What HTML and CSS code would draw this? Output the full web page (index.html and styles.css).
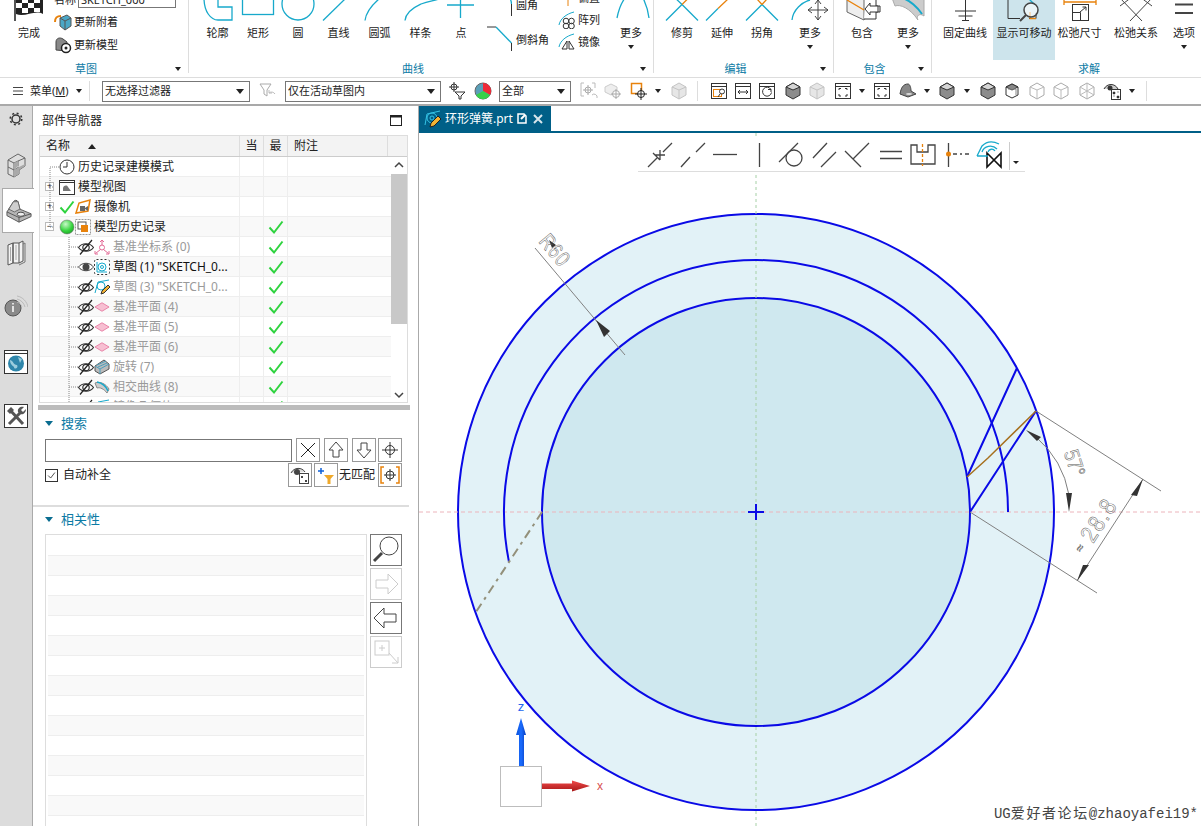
FILE: index.html
```html
<!DOCTYPE html>
<html lang="zh-CN">
<head>
<meta charset="utf-8">
<title>环形弹簧.prt</title>
<link rel="stylesheet" href="styles.css">
</head>
<body>
<svg class="defs" aria-hidden="true">
  <symbol id="eyeoff" viewBox="0 0 16 16"><path d="M.500 8.500C4 3.500 12 3.500 15.500 8.500C12 13.500 4 13.500 .500 8.500Z" fill="none" stroke="#333" stroke-width="1.200"/><circle cx="8" cy="8.500" r="3.200" fill="none" stroke="#333" stroke-width="1.200"/><path d="M2 15.500L14 1" stroke="#222" stroke-width="1.200"/></symbol>
  <symbol id="check" viewBox="0 0 16 16"><path d="M1.500 8.500L6 13.500L14.500 2.500" fill="none" stroke="#2fd33f" stroke-width="2"/></symbol>
  <symbol id="plane" viewBox="0 0 17 16"><path d="M1 8L8.500 3.500L16 8L8.500 12.500Z" fill="#f7bfd2" stroke="#e77fa4"/></symbol>
  <symbol id="cube" viewBox="0 0 18 18"><path d="M9 1L16 5V13L9 17L2 13V5Z" fill="#8c8c8c" stroke="#333"/><path d="M2 5L9 1L16 5L9 8Z" fill="#d5d5d5" stroke="#333"/></symbol>
  <symbol id="cubeg" viewBox="0 0 18 18"><path d="M9 1L16 5V13L9 17L2 13V5Z" fill="#e6e6e6" stroke="#c4c4c4"/><path d="M2 5L9 8L16 5M9 8V17" fill="none" stroke="#c4c4c4"/></symbol>
  <symbol id="cubew" viewBox="0 0 18 18"><path d="M9 1L16 5V13L9 17L2 13V5Z" fill="#fff" stroke="#aaa"/><path d="M2 5L9 8L16 5M9 8V17" fill="none" stroke="#bbb"/></symbol>
  <symbol id="win" viewBox="0 0 18 18"><rect x="1.500" y="1.500" width="15" height="15" fill="#fff" stroke="#333"/><path d="M1.500 4.500H16.500" stroke="#333"/><path d="M5 8V6.500H7M11 6.500H13V8M13 12V14H11M7 14H5V12" fill="none" stroke="#333"/></symbol>
</svg>

<header class="ribbon">
  <section class="group g-sketch">
    <div class="items">
      <div class="rb w42">
        <svg viewBox="0 0 40 22" class="rico"><path d="M6 21V-2" stroke="#555" stroke-width="2"/><path d="M7 -2H34V14C26 9 16 18 7 14Z" fill="#222"/><path d="M13 -2h6v5h-6zM25 -2h6v5h-6zM7 3h6v5H7zM19 3h6v5h-6zM13 8h6v5h-6zM25 8h6v4h-6z" fill="#fff"/></svg>
        <span>完成</span>
      </div>
      <div class="col-sketch">
        <div class="namerow"><span>名称</span><span class="nameinput">SKETCH_000</span></div>
        <div class="srow first"><svg class="sico" viewBox="0 0 18 18"><path d="M6 5L13 2L17 5V13L11 17L6 13Z" fill="#4ba7c6" stroke="#555"/><path d="M6 5L11 8L17 5M11 8V17" fill="none" stroke="#555"/><path d="M1 9C1 4 3 3 7 3" fill="none" stroke="#e8820c" stroke-width="2"/></svg><span>更新附着</span></div>
        <div class="srow"><svg class="sico" viewBox="0 0 18 18"><path d="M2 14V6C2 2 6 1 9 3L13 6V15Z" fill="#888" stroke="#444"/><circle cx="12" cy="12" r="4.500" fill="#fff" stroke="#222" stroke-width="1.500"/><circle cx="12" cy="12" r="1.500" fill="#222"/></svg><span>更新模型</span></div>
      </div>
    </div>
    <div class="gtitle"><span>草图</span><i class="more"></i></div>
  </section>
  <section class="group g-curve">
    <div class="items">
      <div class="rb w41"><svg viewBox="0 0 40 22" class="rico"><path d="M6 -2C6 12 13 20 20 20H34V7H20V-2" class="st"/></svg><span>轮廓</span></div>
      <div class="rb w40"><svg viewBox="0 0 40 22" class="rico"><rect x="4.500" y="-4" width="31" height="18.500" class="st"/></svg><span>矩形</span></div>
      <div class="rb w40"><svg viewBox="0 0 40 22" class="rico"><circle cx="20" cy="4" r="16" class="st"/></svg><span>圆</span></div>
      <div class="rb w41"><svg viewBox="0 0 40 22" class="rico"><path d="M4 20.500L26 -1" class="st"/></svg><span>直线</span></div>
      <div class="rb w41"><svg viewBox="0 0 40 22" class="rico"><path d="M5 20.500C6 12 12 5 19 -1" class="st"/></svg><span>圆弧</span></div>
      <div class="rb w41"><svg viewBox="0 0 40 22" class="rico"><path d="M4 20.500C5 10 18 5 20 4C28 1 32 1 38 -1" class="st"/></svg><span>样条</span></div>
      <div class="rb w40"><svg viewBox="0 0 40 22" class="rico"><path d="M6 5H33M19.500 -3V18" class="st"/></svg><span>点</span></div>
      <div class="smcol big">
        <div class="srow"><svg class="bico" viewBox="0 0 25 35"><path d="M19 3C23 10 24.500 13 24.500 17" class="st"/><path d="M24.500 17V29" stroke="#333" fill="none"/></svg><span>圆角</span></div>
        <div class="srow"><svg class="bico" viewBox="0 0 25 35"><path d="M0 5H9" stroke="#333" fill="none"/><path d="M9 5L24.500 21" class="st"/><path d="M24.500 21V29" stroke="#333" fill="none"/></svg><span>倒斜角</span></div>
      </div>
      <div class="smcol small">
        <div class="srow"><svg class="sico" viewBox="0 0 18 18"><path d="M1 9H10V17" fill="none" stroke="#e8820c"/></svg><span>偏置</span></div>
        <div class="srow"><svg class="sico" viewBox="0 0 18 18"><path d="M1 14C2 8 8 3 16 1" fill="none" stroke="#17a9cb"/><circle cx="8" cy="10" r="2.800" fill="none" stroke="#333"/><circle cx="13.500" cy="10" r="2.800" fill="none" stroke="#333"/><circle cx="8" cy="15" r="2.800" fill="none" stroke="#333"/><circle cx="13.500" cy="15" r="2.800" fill="none" stroke="#333"/></svg><span>阵列</span></div>
        <div class="srow"><svg class="sico" viewBox="0 0 18 18"><path d="M1 14C2 8 8 3 16 1" fill="none" stroke="#17a9cb"/><path d="M9 8L4 16H9ZM11 8V16H16Z" fill="none" stroke="#333"/></svg><span>镜像</span></div>
      </div>
      <div class="rb w44 ml1"><svg viewBox="0 0 40 22" class="rico"><path d="M6 18C8 8 11 2 14 -2M32 -2C35 4 37 10 38 18" class="st"/></svg><span>更多</span><i class="more"></i></div>
    </div>
    <div class="gtitle"><span>曲线</span><i class="more"></i></div>
  </section>
  <section class="group g-edit">
    <div class="items">
      <div class="rb w40"><svg viewBox="0 0 40 22" class="rico"><path d="M4 20.500L20 4.500L36 20.500M20 4.500L10 -5" class="st"/><path d="M20 4.500L26 -1.500" class="so"/></svg><span>修剪</span></div>
      <div class="rb w40"><svg viewBox="0 0 40 22" class="rico"><path d="M4 20.500L16 8.500" class="st"/><path d="M16 8.500L26 -1" class="so"/></svg><span>延伸</span></div>
      <div class="rb w40"><svg viewBox="0 0 40 22" class="rico"><path d="M4 20.500L20 4.500L36 20.500" class="st"/><path d="M20 4.500L15 -1M20 4.500L25 -1" class="so"/></svg><span>拐角</span></div>
      <div class="rb w44 ml6"><svg viewBox="0 0 40 22" class="rico"><path d="M2 20C3 10 12 2 20 0" class="st"/><path d="M28 0V20M18 10H38M25 4L28 0L31 4M25 16L28 20L31 16M22 7L18 10L22 13M34 7L38 10L34 13" fill="none" stroke="#444"/></svg><span>更多</span><i class="more"></i></div>
    </div>
    <div class="gtitle"><span>编辑</span><i class="more"></i></div>
  </section>
  <section class="group g-incl">
    <div class="items">
      <div class="rb w48"><svg viewBox="0 0 40 22" class="rico"><path d="M5 -6V12L22 20V-2Z" fill="#eee" stroke="#666"/><path d="M5 0L22 10" class="so"/><path d="M24 -2H34V6H38V12H34V19H22" fill="#fff" stroke="#333"/><path d="M36 6H28V3L23 9L28 15V12H36Z" fill="#fff" stroke="#333"/></svg><span>包含</span></div>
      <div class="rb w44"><svg viewBox="0 0 40 22" class="rico"><path d="M4 -2C14 -4 26 0 36 -2V16C30 12 28 18 30 20C22 8 12 4 7 6Z" fill="#ccc" stroke="#aaa"/><path d="M14 -2C22 0 30 8 34 14" fill="none" stroke="#17a9cb" stroke-width="2"/></svg><span>更多</span><i class="more"></i></div>
    </div>
    <div class="gtitle"><span>包含</span><i class="more"></i></div>
  </section>
  <section class="group g-solve">
    <div class="items">
      <div class="rb w56"><svg viewBox="0 0 40 22" class="rico"><path d="M20.500 -2V20M10 11H31M13.500 16H27.500M17 20.500H24" fill="none" stroke="#333"/></svg><span>固定曲线</span></div>
      <div class="rb w62 active"><svg viewBox="0 0 40 22" class="rico"><path d="M4 -4V18.500H16M32 13V18.500H25" fill="none" stroke="#333"/><path d="M24 -2L30 4" class="st"/><path d="M26 12V18.500H32" class="so"/><circle cx="27" cy="10" r="7" fill="#fff" fill-opacity=".6" stroke="#444" stroke-width="1.500"/><path d="M22 15L16 21" stroke="#444" stroke-width="2"/></svg><span>显示可移动</span></div>
      <div class="rb w49"><svg viewBox="0 0 40 22" class="rico"><path d="M4 -2V5M4 2H36M36 -2V5" class="so"/><rect x="12.500" y="4.500" width="16" height="16" fill="#fff" stroke="#333"/><path d="M12.500 12.500H20.500V20.500M20 12L26 7M22.500 7H26V10.500" fill="none" stroke="#333"/></svg><span>松弛尺寸</span></div>
      <div class="rb w64"><svg viewBox="0 0 40 22" class="rico"><path d="M4 -2L26 21M36 -2L14 21M4 6L20 -6L36 6" fill="none" stroke="#444"/></svg><span>松弛关系</span></div>
      <div class="rb w32"><svg viewBox="0 0 40 22" class="rico"><path d="M11 4.500H29M11 13H29" stroke="#444" stroke-width="2"/></svg><span>选项</span><i class="more"></i></div>
    </div>
    <div class="gtitle"><span>求解</span></div>
  </section>
</header>

<div class="toolbar">
  <svg class="menuico" viewBox="0 0 10 10"><path d="M0 1.500H10M0 5H10M0 8.500H10" stroke="#444"/></svg>
  <span class="menutext">菜单(<u>M</u>)</span>
  <i class="more ml6"></i>
  <b class="sep ml7"></b>
  <div class="select s148 ml12"><span>无选择过滤器</span><i></i></div>
  <svg class="ti ml8" viewBox="0 0 18 18"><path d="M2 2H13L9 8V14L6 12V8Z" fill="#fff" stroke="#aaa"/><path d="M17 12A4 4 0 0 0 11 11M11 8V11H14" fill="none" stroke="#bbb"/></svg>
  <div class="select s156 ml9"><span>仅在活动草图内</span><i></i></div>
  <svg class="ti ml7" viewBox="0 0 18 18"><circle cx="6" cy="5" r="3" fill="none" stroke="#333"/><path d="M6 0V10M1 5H11" stroke="#333"/><path d="M7 10H17L13 14V17H11V14Z" fill="#fff" stroke="#333"/></svg>
  <svg class="ti ml8" viewBox="0 0 18 18"><circle cx="9" cy="9" r="8" fill="#5a9fb8" stroke="#666"/><path d="M9 9V1A8 8 0 0 1 16 13Z" fill="#ee2a38"/><path d="M9 9L16 13A8 8 0 0 1 2 13Z" fill="#38d04a"/></svg>
  <div class="select s72 ml7"><span>全部</span><i></i></div>
  <svg class="ti ml9" viewBox="0 0 18 18"><path d="M4 1H1V14H4M12 1H15V6" fill="none" stroke="#bbb"/><circle cx="8" cy="8" r="3" fill="none" stroke="#aaa"/><path d="M8 3V13M3 8H13" stroke="#aaa"/><path d="M17 16A3 3 0 0 0 12 13" fill="none" stroke="#bbb"/></svg>
  <svg class="ti ml6" viewBox="0 0 18 18"><path d="M1 5L7 2L13 5V10L7 13L1 10Z" fill="#eee" stroke="#ccc"/><circle cx="12" cy="12" r="3.500" fill="#fff" stroke="#aaa"/><path d="M12 7V17M7 12H17" stroke="#aaa"/></svg>
  <svg class="ti ml8" viewBox="0 0 18 18"><rect x="1.500" y="1.500" width="10" height="10" fill="none" stroke="#e8820c" stroke-width="1.500"/><circle cx="11" cy="12" r="3.500" fill="#fff" stroke="#222"/><path d="M11 6V18M5 12H17" stroke="#222"/></svg>
  <i class="more ml7"></i>
  <svg class="ti ml9"><use href="#cubeg"/></svg>
  <b class="sep ml9"></b>
  <svg class="ti ml12" viewBox="0 0 18 18"><rect x="1.500" y="1.500" width="15" height="15" fill="#fff" stroke="#333"/><path d="M1.500 4.500H16.500" stroke="#333"/><rect x="3.500" y="7.500" width="8" height="7" fill="none" stroke="#e8820c"/><circle cx="12" cy="9.500" r="2.500" fill="#fff" stroke="#333"/><path d="M10 12L8 15" stroke="#333"/></svg>
  <svg class="ti ml6" viewBox="0 0 18 18"><rect x="1.500" y="1.500" width="15" height="15" fill="#fff" stroke="#333"/><path d="M1.500 4.500H16.500M4 10H14M6 8L4 10L6 12M12 8L14 10L12 12" fill="none" stroke="#333"/></svg>
  <svg class="ti ml6" viewBox="0 0 18 18"><rect x="1.500" y="1.500" width="15" height="15" fill="#fff" stroke="#333"/><path d="M1.500 4.500H16.500M13 7.500A4.500 4.500 0 1 0 13.500 10.500M10 7.500H13V10" fill="none" stroke="#333"/></svg>
  <svg class="ti ml8"><use href="#cube"/></svg>
  <svg class="ti ml6"><use href="#cubeg"/></svg>
  <svg class="ti ml8"><use href="#win"/></svg>
  <i class="more ml7"></i>
  <svg class="ti ml8"><use href="#win"/></svg>
  <svg class="ti ml8" viewBox="0 0 18 18"><path d="M1 12C2 6 4 2 9 2C11 2 12 6 12 9L17 12L9 15Z" fill="#888" stroke="#444"/><ellipse cx="10" cy="12" rx="3" ry="1" fill="#ddd"/></svg>
  <i class="more ml7"></i>
  <svg class="ti ml8"><use href="#cube"/></svg>
  <i class="more ml8"></i>
  <svg class="ti ml9"><use href="#cube"/></svg>
  <svg class="ti ml6" viewBox="0 0 18 18"><path d="M9 2L15 5V13L9 16L3 13V5Z" fill="#fff" stroke="#333"/><path d="M3 5L9 2L15 5L9 8Z" fill="#888" stroke="#333"/><path d="M5 7H13V13" fill="none" stroke="#888"/></svg>
  <svg class="ti ml7"><use href="#cubew"/></svg>
  <svg class="ti ml6"><use href="#cubew"/></svg>
  <svg class="ti ml8" viewBox="0 0 18 18"><path d="M9 1L16 5V13L9 17L2 13V5Z" fill="#fff" stroke="#aaa"/><path d="M2 5L16 13M16 5L2 13M9 1V17" fill="none" stroke="#bbb"/></svg>
  <svg class="ti ml7" viewBox="0 0 18 18"><path d="M1 7C4 1 12 1 15 7" fill="#ccc" stroke="#333"/><circle cx="7" cy="6" r="2.500" fill="#333"/><rect x="8.500" y="7.500" width="9" height="10" fill="#fff" stroke="#333"/><path d="M10 10h2v2h-2zM14 10h2M10 14h2M14 14h2v2h-2z" fill="#333" stroke="#333" stroke-width=".5"/></svg>
  <i class="more ml8"></i>
  <b class="sep ml11"></b>
</div>

<main class="main">
  <nav class="tabs">
    <div class="tab t-gear"><svg class="tabi16" viewBox="0 0 16 16"><circle cx="8" cy="8" r="4" fill="none" stroke="#333" stroke-width="1.500"/><circle cx="8" cy="8" r="5.800" fill="none" stroke="#333" stroke-width="1.500" stroke-dasharray="2 2.550"/></svg></div>
    <div class="tab t-cube"><svg class="tabi24" viewBox="0 0 24 26"><path d="M4 8L14 2L21 6V14L15 18V22L10 25L4 22Z" fill="#dedede" stroke="#666"/><path d="M4 8L10 11L14 9L14 14M14 9L21 6M10 11V25M4 15L10 18L15 15" fill="none" stroke="#666"/><path d="M10 11L14 9V14L10 18ZM15 15L21 12V14L15 18ZM10 18L15 15V22L10 25Z" fill="#a9a9a9"/></svg></div>
    <div class="tab t-part active"><svg class="tabi28" viewBox="0 0 28 26"><path d="M1 14L8 3C9 1 12 1 13 3L15 11L27 16V19L14 25L1 18Z" fill="#b5b5b5" stroke="#555"/><path d="M1 14L14 20L27 16M14 20V25" fill="none" stroke="#555"/><path d="M8 3L13 3L15 11L9 14L3 11Z" fill="#cfcfcf" stroke="#666"/><ellipse cx="16" cy="16.500" rx="4" ry="2.200" fill="#eee" stroke="#444"/></svg></div>
    <div class="tab t-book"><svg class="tabi24" viewBox="0 0 24 26"><path d="M4 5L9 3V23L4 25ZM9 3H15V23H9ZM15 3L19 1V21L15 23" fill="#f2f2f2" stroke="#555"/><path d="M6.500 7V21M12 5V20" stroke="#aaa"/><path d="M19 4L21 3V22L15 25" fill="none" stroke="#777"/></svg></div>
    <div class="tab t-info"><svg class="tabi24" viewBox="0 0 24 24"><circle cx="9" cy="14" r="8" fill="#8a8a8a" stroke="#555"/><path d="M9 12V18M9 9V10.500" stroke="#fff" stroke-width="1.500"/><path d="M13 2C19 3 23 8 24 13M13 5C17 6 20 9 21 13M13 8C15 8.500 17 10 18 13" fill="none" stroke="#bbb"/></svg></div>
    <div class="tab t-globe"><svg class="tabi24w" viewBox="0 0 24 24"><rect x=".500" y=".500" width="23" height="23" fill="#fff" stroke="#333"/><path d="M.500 3.500H23.500" stroke="#333"/><circle cx="12" cy="13.500" r="8" fill="#2e86ab"/><path d="M6 10C10 11 9 15 13 15C15 18 10 20 10 17C8 15 6 14 6 10ZM14 7L18 9L16 13Z" fill="#9ccddd"/></svg></div>
    <div class="tab t-tools"><svg class="tabi24w" viewBox="0 0 24 24"><rect x=".500" y=".500" width="23" height="23" fill="#fff" stroke="#333"/><path d="M5 20L17 8M6 6L19 20" stroke="#555" stroke-width="3"/><path d="M3 7L7 3L10 6L6 10Z" fill="#555"/><path d="M14 8C13 4 17 2 20 3L17 6L19 8L22 5C22 9 19 11 16 10Z" fill="#555"/></svg></div>
  </nav>

  <aside class="navpanel">
    <div class="navtitle"><span>部件导航器</span><svg class="maxi" viewBox="0 0 12 11"><rect x=".500" y=".500" width="11" height="10" fill="none" stroke="#222"/><path d="M0 1.500H12" stroke="#222" stroke-width="2"/></svg></div>
    <div class="tree">
      <div class="thead">
        <div class="th th-name"><span>名称</span><i></i></div>
        <div class="th">当</div>
        <div class="th">最</div>
        <div class="th th-left">附注</div>
        <div class="th th-end"></div>
      </div>
      <div class="tbody">
        <div class="rows">
          <div class="row"><div class="cell p19"><svg class="i16" viewBox="0 0 16 16"><circle cx="8" cy="8" r="7" fill="#fff" stroke="#333"/><path d="M8 3V8H4" fill="none" stroke="#333"/></svg><span class="t3">历史记录建模模式</span></div><div class="cell"></div><div class="cell"></div><div class="cell"></div></div>
          <div class="row"><div class="cell p5"><b class="exp">+</b><svg class="i16" viewBox="0 0 16 16"><rect x=".500" y="1.500" width="15" height="14" fill="#fff" stroke="#333"/><path d="M.500 3.500H15.500" stroke="#333"/><path d="M4 12V9C5 6 8 6 9 8L12 12Z" fill="#777"/></svg><span class="t3">模型视图</span></div><div class="cell"></div><div class="cell"></div><div class="cell"></div></div>
          <div class="row"><div class="cell p5"><b class="exp">+</b><svg class="i16"><use href="#check"/></svg><svg class="i16" viewBox="0 0 16 16"><path d="M1 14L4 4L15 1L13 12Z" fill="#fff" stroke="#e8820c" stroke-width="1.500"/><path d="M5 7H10V12H5ZM10 9L13 7V12L10 10Z" fill="#666"/></svg><span class="t2">摄像机</span></div><div class="cell"></div><div class="cell"></div><div class="cell"></div></div>
          <div class="row"><div class="cell p5"><b class="exp">&minus;</b><svg class="i16" viewBox="0 0 16 16"><defs><radialGradient id="ball" cx=".4" cy=".3" r=".8"><stop offset="0" stop-color="#c8f8c8"/><stop offset=".6" stop-color="#34d33c"/><stop offset="1" stop-color="#1b9a25"/></radialGradient></defs><circle cx="8" cy="8" r="7" fill="url(#ball)" stroke="#666" stroke-width=".5"/></svg><svg class="i16" viewBox="0 0 16 16"><rect x=".500" y=".500" width="15" height="15" fill="#fff" stroke="#999" stroke-dasharray="2 1"/><rect x="3" y="3" width="8" height="7" fill="#fff" stroke="#555"/><rect x="6" y="6" width="7" height="7" fill="#e8820c"/></svg><span class="t2">模型历史记录</span></div><div class="cell"></div><div class="cell ck"><svg class="i16"><use href="#check"/></svg></div><div class="cell"></div></div>
          <div class="row off"><div class="cell p38"><svg class="i16"><use href="#eyeoff"/></svg><svg class="i16" viewBox="0 0 16 16"><circle cx="8" cy="8.500" r="2.500" fill="none" stroke="#e36a96"/><path d="M8 1V6M6.500 10.500L1.500 14.500M9.500 10.500L14.500 14.500M6 3L8 1L10 3M1 12V15H4M15 12V15H12" fill="none" stroke="#e36a96"/></svg><span class="t1">基准坐标系 (0)</span></div><div class="cell"></div><div class="cell ck"><svg class="i16"><use href="#check"/></svg></div><div class="cell"></div></div>
          <div class="row dark"><div class="cell p38"><svg class="i16" viewBox="0 0 16 16"><path d="M.500 8C4 3 12 3 15.500 8C12 13 4 13 .500 8Z" fill="#fff" stroke="#444"/><circle cx="8" cy="8" r="3.500" fill="#444"/></svg><svg class="i16" viewBox="0 0 16 16"><rect x=".500" y=".500" width="15" height="15" rx="2" fill="#fff" stroke="#333" stroke-dasharray="2 2"/><circle cx="8" cy="8" r="4" fill="none" stroke="#17a9cb"/><circle cx="8" cy="8" r="1.500" fill="none" stroke="#17a9cb"/><path d="M3 13H13M3 3V13" stroke="#17a9cb"/></svg><span class="t1">草图 (1) "SKETCH_0...</span></div><div class="cell"></div><div class="cell ck"><svg class="i16"><use href="#check"/></svg></div><div class="cell"></div></div>
          <div class="row off alt0"><div class="cell p38"><svg class="i16"><use href="#eyeoff"/></svg><svg class="i16" viewBox="0 0 16 16"><path d="M1 14L4 3L15 1" fill="none" stroke="#17a9cb"/><circle cx="7" cy="7" r="4" fill="none" stroke="#17a9cb"/><path d="M7 15L8 12L14 6L16 8L10 14Z" fill="#f2b234" stroke="#333"/></svg><span class="t1">草图 (3) "SKETCH_0...</span></div><div class="cell"></div><div class="cell ck"><svg class="i16"><use href="#check"/></svg></div><div class="cell"></div></div>
          <div class="row off"><div class="cell p38"><svg class="i16"><use href="#eyeoff"/></svg><svg class="i16"><use href="#plane"/></svg><span class="t1">基准平面 (4)</span></div><div class="cell"></div><div class="cell ck"><svg class="i16"><use href="#check"/></svg></div><div class="cell"></div></div>
          <div class="row off"><div class="cell p38"><svg class="i16"><use href="#eyeoff"/></svg><svg class="i16"><use href="#plane"/></svg><span class="t1">基准平面 (5)</span></div><div class="cell"></div><div class="cell ck"><svg class="i16"><use href="#check"/></svg></div><div class="cell"></div></div>
          <div class="row off"><div class="cell p38"><svg class="i16"><use href="#eyeoff"/></svg><svg class="i16"><use href="#plane"/></svg><span class="t1">基准平面 (6)</span></div><div class="cell"></div><div class="cell ck"><svg class="i16"><use href="#check"/></svg></div><div class="cell"></div></div>
          <div class="row off"><div class="cell p38"><svg class="i16"><use href="#eyeoff"/></svg><svg class="i16" viewBox="0 0 16 16"><path d="M1 7L10 1L15 5V10L6 15L1 12Z" fill="#bbb" stroke="#555"/><path d="M3 6L12 2M4 8L13 4M1 7L6 10L15 5M6 10V15" fill="none" stroke="#4b9fbd"/></svg><span class="t1">旋转 (7)</span></div><div class="cell"></div><div class="cell ck"><svg class="i16"><use href="#check"/></svg></div><div class="cell"></div></div>
          <div class="row off"><div class="cell p38"><svg class="i16"><use href="#eyeoff"/></svg><svg class="i16" viewBox="0 0 16 16"><path d="M1 4C6 2 12 5 15 10L13 14C10 10 6 8 3 9Z" fill="#ccc" stroke="#888"/><path d="M3 3C8 4 12 7 14 12" fill="none" stroke="#17a9cb" stroke-width="1.500"/></svg><span class="t1">相交曲线 (8)</span></div><div class="cell"></div><div class="cell ck"><svg class="i16"><use href="#check"/></svg></div><div class="cell"></div></div>
          <div class="row off"><div class="cell p38"><svg class="i16"><use href="#eyeoff"/></svg><svg class="i16" viewBox="0 0 16 16"><path d="M1 14L4 3L15 1" fill="none" stroke="#17a9cb"/><circle cx="7" cy="7" r="4" fill="none" stroke="#17a9cb"/></svg><span class="t1">镜像几何体 (9)</span></div><div class="cell"></div><div class="cell ck"><svg class="i16"><use href="#check"/></svg></div><div class="cell"></div></div>
        </div>
        <div class="scroll">
          <svg class="sarrow" viewBox="0 0 16 16"><path d="M4 10L8 6L12 10" fill="none" stroke="#444" stroke-width="1.500"/></svg>
          <div class="thumb"></div>
          <svg class="sarrow bottom" viewBox="0 0 16 16"><path d="M4 6L8 10L12 6" fill="none" stroke="#444" stroke-width="1.500"/></svg>
        </div>
        <svg class="guides" viewBox="0 0 351 246"><path d="M19 10H10V70M10 30H13M10 50H13M10 70H13M29 80V246M29 90H38M29 110H38M29 130H38M29 150H38M29 170H38M29 190H38M29 210H38M29 230H38" fill="none" stroke="#888" stroke-dasharray="1 1"/></svg>
      </div>
    </div>
    <div class="splitter"></div>
    <section class="search">
      <div class="sechead"><i></i><span>搜索</span></div>
      <div class="srch1">
        <div class="sinput"></div>
        <button class="ib m4"><svg viewBox="0 0 22 22"><path d="M4 4L18 18M18 4L4 18" stroke="#222"/></svg></button>
        <button class="ib m4"><svg viewBox="0 0 22 22"><path d="M11 3L18 11H14V18H8V11H4Z" fill="none" stroke="#444"/></svg></button>
        <button class="ib m4"><svg viewBox="0 0 22 22"><path d="M11 19L18 11H14V4H8V11H4Z" fill="none" stroke="#444"/></svg></button>
        <button class="ib m2"><svg viewBox="0 0 22 22"><circle cx="11" cy="11" r="4.500" fill="none" stroke="#333"/><path d="M11 3V19M3 11H19" stroke="#333"/></svg></button>
      </div>
      <div class="srch2">
        <span class="checkbox"><svg viewBox="0 0 13 13"><path d="M2.500 6.500L5.500 9.500L10.500 3" fill="none" stroke="#333"/></svg></span>
        <span class="autotxt">自动补全</span>
        <button class="ib"><svg viewBox="0 0 22 22"><path d="M2 9C5 3 13 3 16 8" fill="#ddd" stroke="#444"/><circle cx="8" cy="8" r="3" fill="#444"/><rect x="10.500" y="9.500" width="9" height="10" fill="#fff" stroke="#444"/><path d="M12 12h2v2h-2zM16 12h2M12 16h2M16 16h2v2h-2z" fill="#444"/></svg></button>
        <button class="ib m2l"><svg viewBox="0 0 22 22"><path d="M6 4V10M3 7H9" stroke="#0d5fd8" stroke-width="1.500"/><path d="M9 11H19L15.500 15V20H12.500V15Z" fill="#f0a92a"/></svg></button>
        <span class="nomatch">无匹配</span>
        <button class="ib"><svg viewBox="0 0 22 22"><path d="M5 3H2V19H5M17 3H20V19H17" fill="none" stroke="#e8820c" stroke-width="1.500"/><circle cx="11" cy="11" r="4" fill="none" stroke="#333"/><path d="M11 5V17M5 11H17" stroke="#333"/></svg></button>
      </div>
    </section>
    <section class="deps">
      <div class="sechead"><i></i><span>相关性</span></div>
      <div class="depbody">
        <div class="deplist">
          <div></div><div></div><div></div><div></div><div></div><div></div><div></div><div></div><div></div><div></div><div></div><div></div><div></div><div></div><div></div>
        </div>
        <div class="depbtns">
          <button class="lb"><svg viewBox="0 0 30 30"><circle cx="18" cy="11" r="9" fill="#fff" stroke="#444"/><path d="M11 18L3 26" stroke="#444" stroke-width="3"/></svg></button>
          <button class="lb dim"><svg viewBox="0 0 30 30"><path d="M5 11H17V5L27 15L17 25V19H5Z" fill="#fff" stroke="#ccc"/></svg></button>
          <button class="lb"><svg viewBox="0 0 30 30"><path d="M25 11H13V5L3 15L13 25V19H25Z" fill="#fff" stroke="#444"/></svg></button>
          <button class="lb dim"><svg viewBox="0 0 30 30"><rect x="4" y="4" width="14" height="14" fill="#fff" stroke="#ccc"/><path d="M8 11H14M11 8V14M18 16L27 26M27 20V26H21" fill="none" stroke="#ccc"/></svg></button>
        </div>
      </div>
    </section>
  </aside>

  <section class="view">
    <div class="tabbar">
      <div class="doctab">
        <svg class="dicon" viewBox="0 0 18 18"><path d="M1 15L3 4L16 1" fill="none" stroke="#35c3e6"/><circle cx="8" cy="8" r="5" fill="none" stroke="#35c3e6"/><circle cx="8" cy="8" r="2" fill="none" stroke="#35c3e6"/><path d="M6 17L7 13L14 6L17 9L10 16Z" fill="#f2b234" stroke="#222"/></svg>
        <span class="dname">环形弹簧.prt</span>
        <svg class="dsave" viewBox="0 0 10 11"><path d="M1 1H7L9 3V10H1Z" fill="none" stroke="#fff" stroke-width="1.500"/><path d="M4 6L8 2" stroke="#fff" stroke-width="2"/></svg>
        <svg class="dclose" viewBox="0 0 10 10"><path d="M1 1L9 9M9 1L1 9" stroke="#d8e6ec" stroke-width="2"/></svg>
      </div>
    </div>
    <div class="canvas">
      <svg class="drawing" viewBox="419 133 782 693">
        <defs>
          <linearGradient id="zg" x1="0" x2="1" y1="0" y2="0"><stop offset="0" stop-color="#0a50d8"/><stop offset=".5" stop-color="#1a6cff"/><stop offset="1" stop-color="#0a3fc0"/></linearGradient>
          <linearGradient id="xg" x1="0" x2="0" y1="0" y2="1"><stop offset="0" stop-color="#f04a4a"/><stop offset="1" stop-color="#a81818"/></linearGradient>
        </defs>
        <circle cx="756" cy="512" r="298" class="ring"/>
        <circle cx="756" cy="512" r="214" class="core"/>
        <path d="M756 133V826" class="axisv"/>
        <path d="M419 512H1201" class="axish"/>
        <path d="M1008 512A252 252 0 1 0 509 562" class="bl"/>
        <path d="M967 477L1017 368M970 512L1036 411" class="bl"/>
        <path d="M967 477L988 458L1036 411" class="brown"/>
        <path d="M542 512L476 612" class="ghost"/>
        <path d="M1036 411L1161 491M970 512L1097 593M1143 479L1077 581" class="dim"/>
        <path d="M535 248L625 355" class="dim"/>
        <path d="M1036 437A99 99 0 0 1 1069 495" class="dim"/>
        <path d="M596 320L610 331L604 337Z M1143 479L1131 495L1137 496Z M1077 581L1089 565L1083 565Z M1026 430L1041 437L1037 441Z M1069 512L1066 493L1072 493Z M549 240L556 245L552 248Z" class="arrow"/>
        <text transform="translate(555 250) rotate(50) scale(.8 1)" class="dtext">R60</text>
        <text transform="translate(1099 520) rotate(-57) scale(.85 1)" class="dtext wide">28.8</text>
        <text transform="translate(1080 548) rotate(-57)" class="dtext tiny">≈</text>
        <text transform="translate(1075 463) rotate(72) scale(.85 1)" class="dtext mid">57°</text>
        <path d="M748 512H764M756 504V520" class="centre"/>
        <path d="M519 766V735H516L521 718L526 735H524V766Z" fill="url(#zg)"/>
        <path d="M541 783.500H572V780.500L590 786L572 791.500V789H541Z" fill="url(#xg)"/>
        <rect x="500.500" y="766.500" width="41" height="40" class="tsq"/>
        <text x="521" y="711" class="tz">z</text>
        <text x="600" y="790" class="tx">x</text>
      </svg>
      <svg class="sketchbar" viewBox="638 136 387 35">
        <g class="sk">
          <path d="M648 167L657 158M663 152L672 143M653 153L660 160M660 150V155H665M660 160V155H655"/>
          <path d="M681 167L690 157M696 152L705 143"/>
          <path d="M713 154.500H737"/>
          <path d="M759.500 143V167"/>
          <path d="M779 162L798 143"/>
          <circle cx="794" cy="158" r="8"/>
          <path d="M813 158L827 143M821 167L836 152"/>
          <path d="M845 151L861 167M853 159L869 143"/>
          <path d="M880 151.500H902M880 158.500H902"/>
          <path d="M911 145H917V152H928V145H935V164H911Z"/>
          <path d="M948.500 143V167M953 154H957M960 154H962M965 154H969"/>
          <path d="M987 153L1001 167V153L987 167Z" class="skb"/>
          <path d="M1009.500 142V170" class="skl"/>
        </g>
        <path d="M922.500 144V166" class="skdash"/>
        <circle cx="948.500" cy="154" r="2.500" fill="#e8820c"/>
        <path d="M977 156L982 146C988 140 995 142 999 144M977 156H988M982 152C984 146 992 144 997 149M988 152C989 149 993 148 995 151" fill="none" stroke="#17a9cb" stroke-width="1.300"/>
        <path d="M1013 161H1019L1016 164Z" fill="#222"/>
      </svg>
      <div class="watermark">UG<span class="cjk">爱好者论坛</span>@zhaoyafei19*</div>
    </div>
  </section>
</main>
</body>
</html>
```

FILE: styles.css
```css
* { box-sizing: border-box; }
html, body { margin: 0; padding: 0; height: 826px; overflow: hidden; background: #fff; }
body { font: 12px/16px "Noto Sans", "Noto Sans CJK SC", sans-serif; color: #222; width: 1201px; }
.defs { position: absolute; width: 0; height: 0; }
button { padding: 0; margin: 0; background: #fff; font: inherit; }
svg { display: block; flex: none; }

/* ribbon */
.ribbon { display: flex; height: 78px; overflow: hidden; border-bottom: 1px solid #ddd; }
.group { display: flex; flex-direction: column; height: 77px; flex: none; position: relative; }
.g-sketch { width: 189px; padding-left: 8px; }
.g-curve { width: 465px; padding-left: 8px; }
.g-edit { width: 180px; padding-left: 8px; }
.g-incl { width: 98px; padding-left: 4px; }
.g-solve { width: 269px; padding-left: 5px; }
.g-sketch::after, .g-curve::after, .g-edit::after, .g-incl::after {
  content: ""; position: absolute; right: 0; top: 0; bottom: 4px; width: 1px; background: #ddd;
}
.items { display: flex; height: 60px; }
.rb { display: flex; flex-direction: column; align-items: center; height: 60px; flex: none; font-size: 11px; line-height: 16px; }
.rb span { margin-top: 3px; white-space: nowrap; }
.rb .more { margin-top: 4px; }
.rb.active { background: #cde4ec; }
.rico { width: 40px; height: 22px; overflow: hidden; }
.w32 { width: 32px; } .w40 { width: 40px; } .w41 { width: 41px; } .w42 { width: 42px; }
.w44 { width: 44px; } .w48 { width: 48px; } .w49 { width: 49px; } .w56 { width: 56px; }
.w62 { width: 62px; } .w64 { width: 64px; }
.ml1 { margin-left: 1px; }
.st { fill: none; stroke: #17a9cb; stroke-width: 1.3; }
.so { fill: none; stroke: #e8820c; stroke-width: 1.3; }
.more { display: block; flex: none; width: 0; height: 0; border: 3.5px solid transparent; border-top: 4px solid #222; border-bottom: 0; }

.col-sketch { margin: -9px 0 0 4px; font-size: 11px; width: 125px; }
.namerow { display: flex; align-items: center; height: 17px; gap: 2px; }
.nameinput { width: 98px; height: 17px; border: 1px solid #777; padding-left: 2px; line-height: 15px; }
.srow { display: flex; align-items: center; height: 23px; gap: 2px; font-size: 11px; white-space: nowrap; }
.srow.first { margin-top: 2px; }
.sico { width: 18px; height: 18px; }
.bico { width: 25px; height: 35px; }
.smcol { flex: none; margin-top: -13px; }
.smcol.big { width: 70px; margin-left: 6px; }
.smcol.big .srow { height: 35px; gap: 4px; }
.smcol.small { width: 50px; margin-left: 1px; }
.smcol.small .srow { height: 22px; gap: 2px; }
.gtitle { display: flex; align-items: center; height: 17px; margin-left: -8px; color: #0c7ba5; font-size: 11px; }
.gtitle span { flex: 1; text-align: center; }
.gtitle .more { margin: 0 8px 0 3px; }
.g-incl .gtitle { margin-left: -4px; }
.g-solve .gtitle { margin-left: 40px; }

/* toolbar */
.toolbar { display: flex; align-items: center; height: 28px; padding-left: 13px; border-bottom: 2px solid #a9a9a9; }
.menuico { width: 10px; height: 10px; }
.menutext { margin-left: 7px; width: 40px; font-size: 11px; white-space: nowrap; }
.sep { display: block; flex: none; width: 1px; height: 20px; background: #ddd; }
.ti { width: 18px; height: 18px; }
.ml6 { margin-left: 6px; } .ml7 { margin-left: 7px; } .ml8 { margin-left: 8px; } .ml9 { margin-left: 9px; }
.ml11 { margin-left: 11px; } .ml12 { margin-left: 12px; }
.select { display: flex; align-items: center; justify-content: space-between; flex: none; height: 21px; border: 1px solid #777; padding: 0 5px 0 2px; font-size: 11px; }
.select i { width: 0; height: 0; border: 4px solid transparent; border-top: 5px solid #222; border-bottom: 0; }
.s148 { width: 148px; } .s156 { width: 156px; } .s72 { width: 72px; }

/* main */
.main { display: flex; height: 720px; }
.tabs { width: 33px; flex: none; background: #dcdcdc; border-right: 1px solid #aaa; }
.tab { display: flex; justify-content: center; }
.t-gear { height: 26px; padding-top: 5px; }
.t-cube { height: 56px; padding-top: 20px; }
.t-part { height: 45px; align-items: center; }
.t-part.active { width: 32px; margin-left: 2px; background: #fff; border: 1px solid #aaa; border-right: 0; }
.t-book { height: 39px; align-items: center; }
.t-info { height: 68px; align-items: center; }
.t-globe { height: 44px; align-items: center; }
.t-tools { height: 64px; align-items: center; }
.tabi16 { width: 16px; height: 16px; }
.tabi24 { width: 24px; height: 26px; }
.tabi28 { width: 26px; height: 26px; }
.tabi24w { width: 24px; height: 24px; }

.navpanel { width: 386px; flex: none; border-right: 1px solid #aaa; overflow: hidden; }
.navtitle { display: flex; align-items: center; justify-content: space-between; height: 29px; padding: 0 16px 0 9px; font-size: 12px; }
.maxi { width: 12px; height: 11px; }
.tree { width: 369px; height: 268px; margin-left: 6px; border: 1px solid #ddd; overflow: hidden; }
.thead { display: grid; grid-template-columns: 200px 24px 24px 100px 1fr; height: 21px; background: #f3f3f3; border-bottom: 1px solid #ccc; }
.th { display: flex; align-items: center; justify-content: center; border-right: 1px solid #ddd; }
.th-name { justify-content: flex-start; padding-left: 6px; }
.th-name i { width: 0; height: 0; margin-left: 18px; border: 4.5px solid transparent; border-bottom: 5px solid #222; border-top: 0; }
.th-left { justify-content: flex-start; padding-left: 6px; }
.th-end { border-right: 0; }
.tbody { display: flex; position: relative; height: 246px; }
.rows { width: 351px; flex: none; }
.row { display: grid; grid-template-columns: 200px 24px 24px 1fr; height: 20px; border-bottom: 1px solid #eee; }
.row:nth-child(even) { background: #f9f9f9; }
.cell { display: flex; align-items: center; border-right: 1px solid #eee; white-space: nowrap; overflow: hidden; }
.cell.ck { justify-content: center; padding-left: 1px; }
.cell:last-child { border-right: 0; }
.p5 { padding-left: 5px; } .p19 { padding-left: 19px; } .p38 { padding-left: 38px; }
.i16 { width: 16px; height: 16px; }
.exp { display: flex; align-items: center; justify-content: center; width: 9px; height: 9px; margin-right: 5px; flex: none; background: #fff; border: 1px solid #bbb; font: 400 9px/9px "Liberation Sans", sans-serif; color: #111; }
.t1 { margin-left: 3px; } .t2 { margin-left: 3px; } .t3 { margin-left: 3px; }
.off { color: #9a9a9a; }
.dark { color: #111; }
.scroll { flex: 1; position: relative; display: flex; flex-direction: column; align-items: center; }
.sarrow { width: 16px; height: 16px; }
.sarrow.bottom { margin-top: auto; }
.thumb { width: 16px; height: 150px; margin-top: 1px; background: #c8c8c8; }
.guides { position: absolute; left: 0; top: 0; width: 351px; height: 246px; pointer-events: none; }

.splitter { width: 372px; height: 5px; margin: 2px 0 0 5px; background: #bcbcbc; }

.sechead { display: flex; align-items: center; height: 20px; gap: 8px; color: #0c7ba5; font-size: 13px; }
.sechead i { width: 0; height: 0; border: 4.5px solid transparent; border-top: 5px solid #0a6d90; border-bottom: 0; }
.search { height: 97px; padding: 3px 0 0 12px; border-bottom: 2px solid #ddd; width: 376px; margin-left: 0; }
.srch1 { display: flex; align-items: center; margin-top: 5px; height: 24px; }
.sinput { width: 247px; height: 23px; border: 1px solid #777; }
.ib { width: 24px; height: 24px; flex: none; border: 1px solid #999; }
.ib svg { width: 22px; height: 22px; }
.m4 { margin-left: 4px; } .m2 { margin-left: 2px; } .m2l { margin-left: 2px; }
.srch1 .ib:first-of-type { margin-left: 4px; }
.srch2 { display: flex; align-items: center; height: 24px; margin-top: 1px; }
.checkbox { width: 13px; height: 13px; flex: none; border: 1px solid #333; }
.checkbox svg { width: 11px; height: 11px; }
.autotxt { margin-left: 5px; width: 225px; }
.nomatch { width: 40px; padding-left: 1px; font-size: 12px; white-space: nowrap; }
.deps { padding: 2px 0 0 12px; }
.depbody { display: flex; margin-top: 5px; }
.deplist { width: 322px; height: 400px; flex: none; padding: 0 2px; border: 1px solid #ddd; border-top-width: 1px; }
.deplist div { height: 20px; border-bottom: 1px solid #eee; }
.deplist div:first-child { height: 21px; }
.deplist div:nth-child(even) { background: #f9f9f9; }
.depbtns { margin-left: 3px; }
.lb { display: block; width: 32px; height: 32px; margin-bottom: 2px; border: 1px solid #777; }
.lb svg { width: 30px; height: 30px; }
.lb.dim { border-color: #ccc; }

/* viewport */
.view { flex: 1; min-width: 0; }
.tabbar { height: 27px; border-bottom: 2px solid #005f87; }
.doctab { display: flex; align-items: center; width: 132px; height: 25px; background: #005f87; color: #fff; padding-left: 5px; }
.dicon { width: 18px; height: 18px; }
.dname { margin-left: 3px; width: 72px; white-space: nowrap; font-size: 12px; }
.dsave { width: 10px; height: 11px; }
.dclose { width: 10px; height: 10px; margin-left: 6px; }
.canvas { position: relative; height: 693px; overflow: hidden; }
.drawing { width: 782px; height: 693px; }
.ring { fill: #e2f2f7; stroke: #0a0ae6; stroke-width: 2; }
.core { fill: #cfe8ef; stroke: #0a0ae6; stroke-width: 2; }
.axisv { stroke: #a6d0a6; stroke-width: 1; stroke-dasharray: 3 3; }
.axish { stroke: #ecb4bb; stroke-width: 1; stroke-dasharray: 4 3; }
.bl { fill: none; stroke: #0a0ae6; stroke-width: 2; }
.brown { fill: none; stroke: #a6701f; stroke-width: 1.5; }
.ghost { fill: none; stroke: #93907a; stroke-width: 2; stroke-dasharray: 9 5 3 5; }
.dim { fill: none; stroke: #808080; stroke-width: 1; }
.arrow { fill: #333; }
.dtext { font: 22px "Liberation Sans", sans-serif; fill: none; stroke: #555; stroke-width: .5; text-anchor: middle; dominant-baseline: central; letter-spacing: 1px; }
.dtext.wide { font-size: 24px; letter-spacing: 2px; }
.dtext.tiny { font-size: 12px; letter-spacing: 0; }
.dtext.mid { font-size: 21px; letter-spacing: 0; }
.centre { stroke: #0a0ae6; stroke-width: 2; fill: none; }
.tsq { fill: #fff; stroke: #bdbdbd; }
.tz { font: 13px "Liberation Sans", sans-serif; fill: #2266ee; text-anchor: middle; }
.tx { font: 12px "Liberation Sans", sans-serif; fill: #d85050; text-anchor: middle; }
.sketchbar { position: absolute; left: 219px; top: 3px; box-sizing: content-box; width: 387px; height: 35px; background: #fff; border-bottom: 1px solid #ddd; }
.sk { fill: none; stroke: #444; stroke-width: 1.3; }
.skb { stroke: #111; stroke-width: 1.6; }
.skl { stroke: #ccc; stroke-width: 1; }
.skdash { stroke: #e8820c; stroke-width: 1.3; stroke-dasharray: 3 2; fill: none; }
.watermark { position: absolute; right: 3px; bottom: 4px; font: 14px/16px "Liberation Mono", monospace; color: #444; background: #fff; white-space: nowrap; }
.cjk { font-family: "Noto Sans CJK SC", sans-serif; letter-spacing: 1.6px; }
```
